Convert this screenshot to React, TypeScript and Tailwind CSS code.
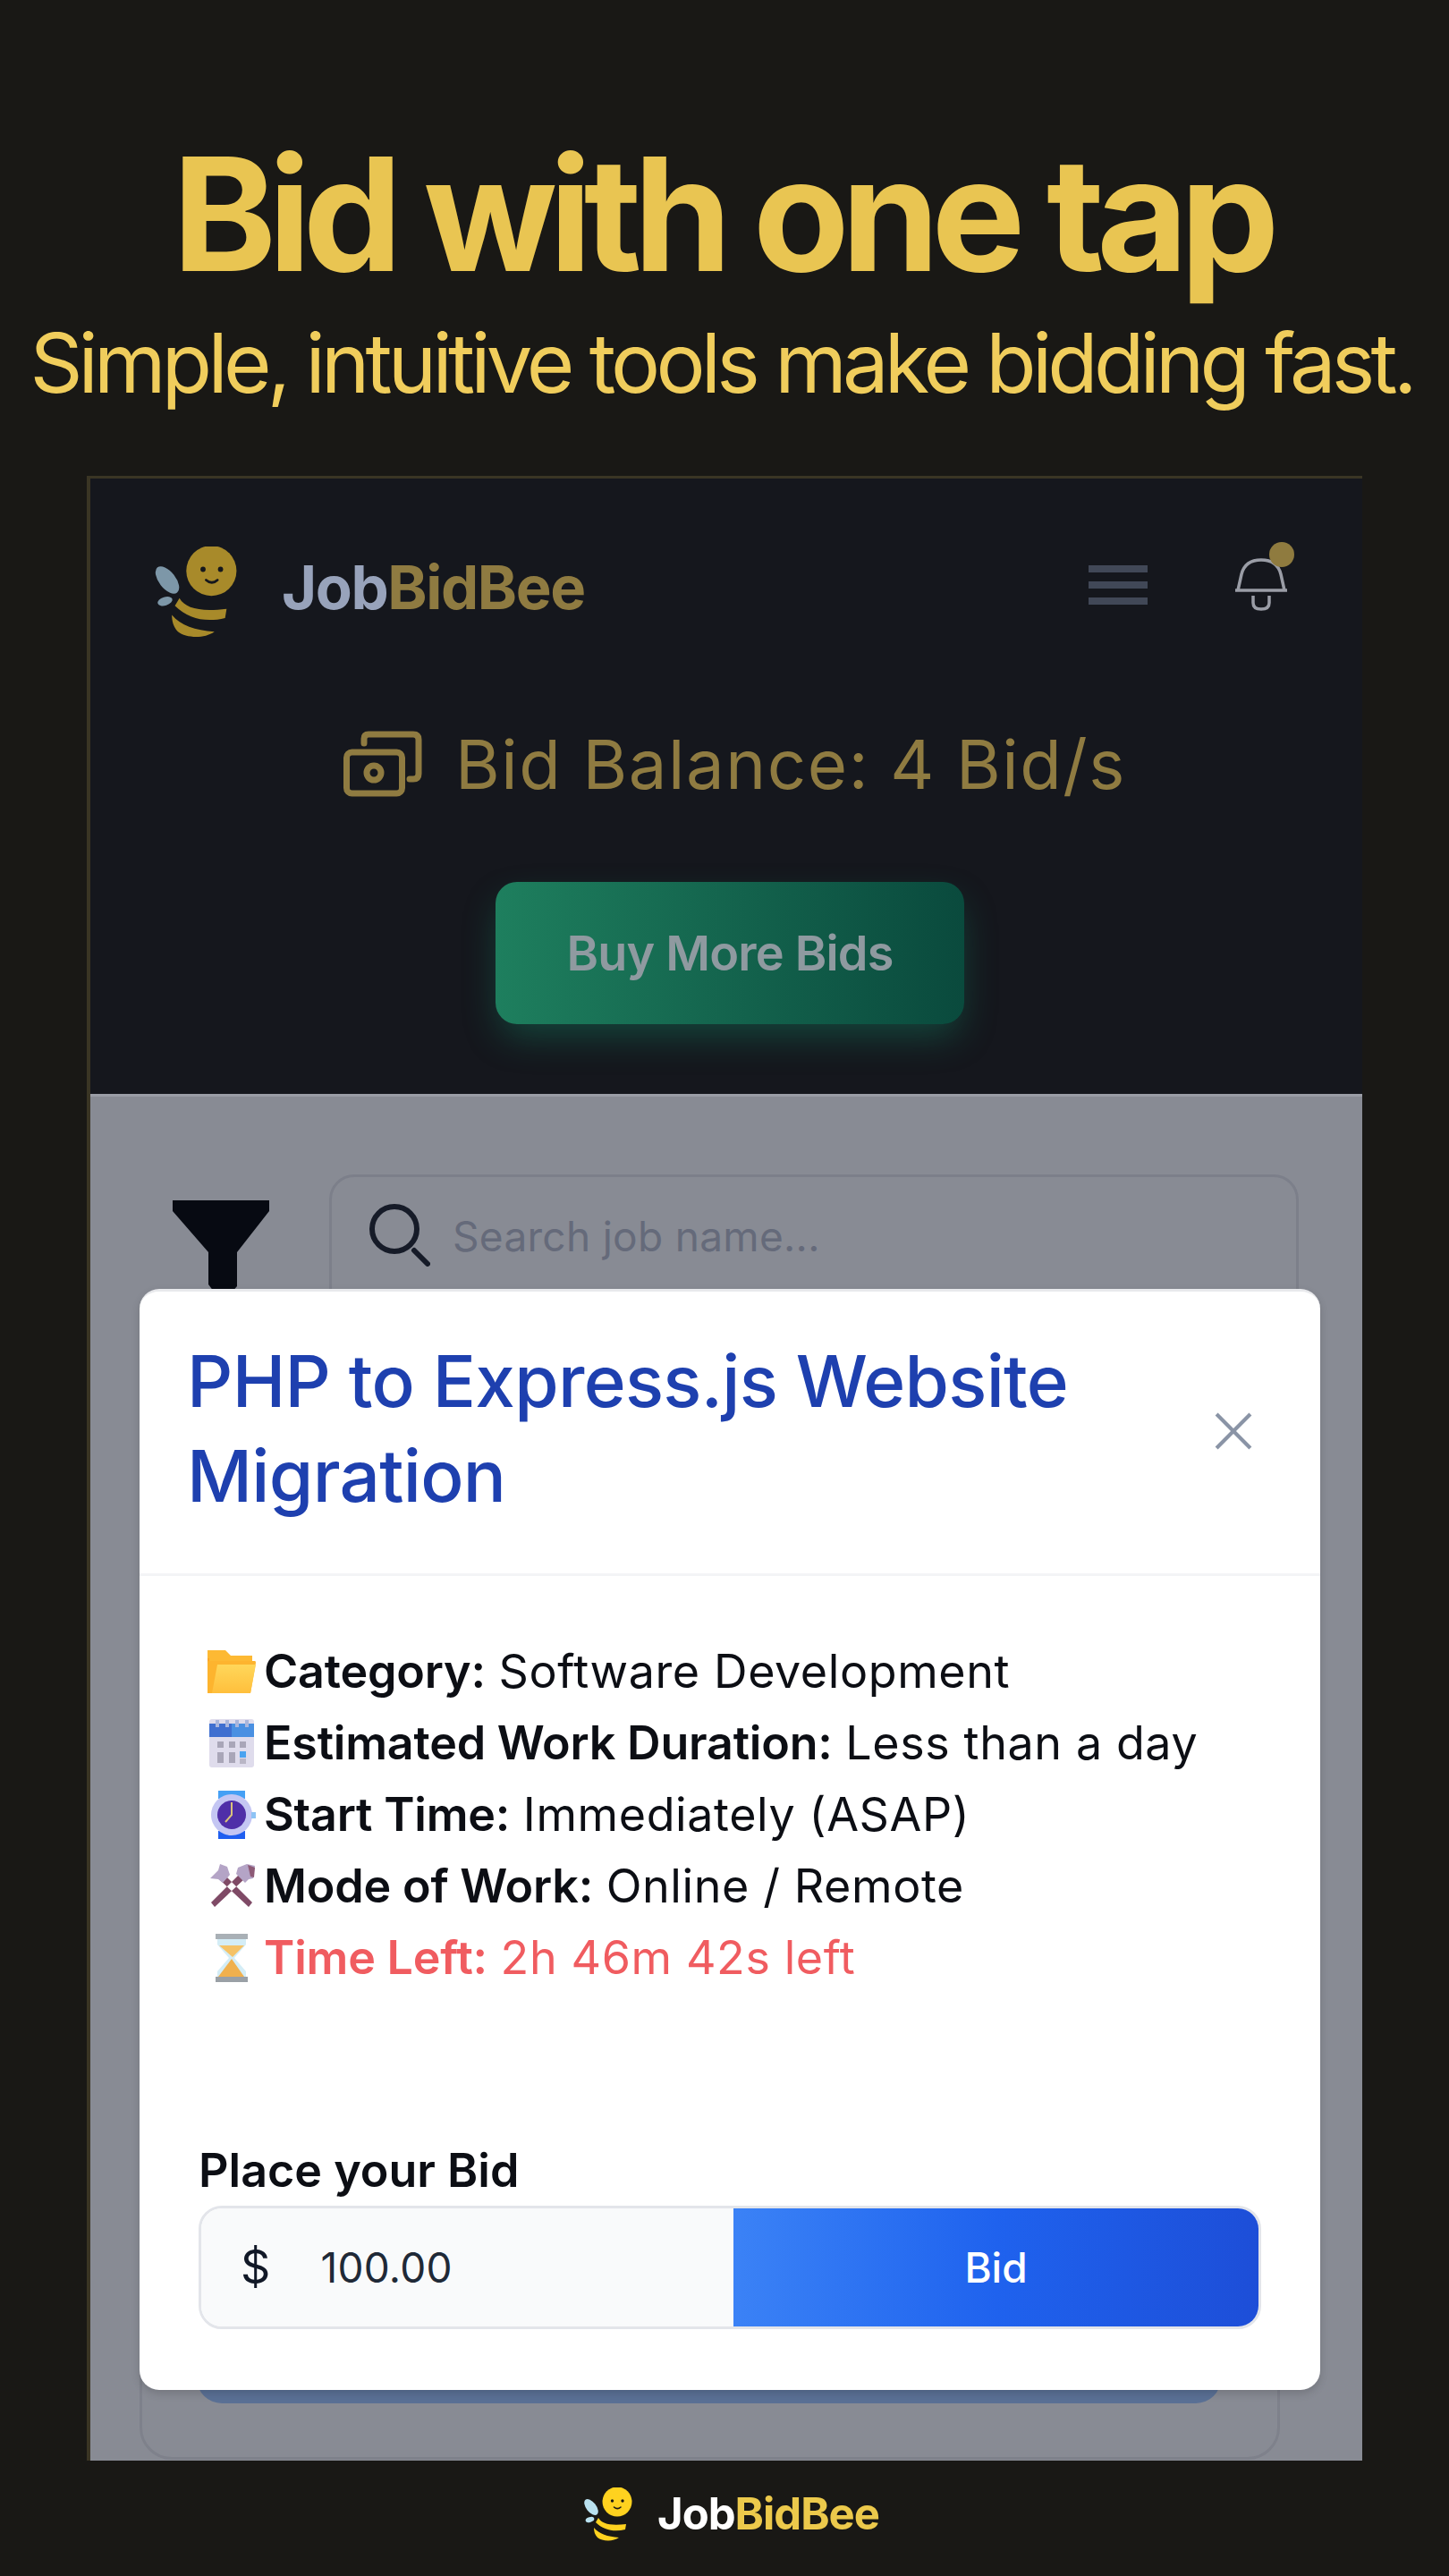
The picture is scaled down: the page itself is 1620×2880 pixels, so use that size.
const inter = "font-['Inter',sans-serif]";

function Bee({ className, head, stripe, wing, face }: { className: string; head: string; stripe: string; wing: string; face: string }) {
  return (
    <svg viewBox="0 0 57 60" className={className}>
      <ellipse cx="10" cy="22" rx="5.5" ry="10.5" transform="rotate(-38 10 22)" fill={wing} />
      <ellipse cx="8.5" cy="36" rx="5" ry="2.8" transform="rotate(-18 8.5 36)" fill={wing} />
      <circle cx="39" cy="16" r="16.5" fill={head} />
      <circle cx="33.5" cy="15" r="1.7" fill={face} />
      <circle cx="45" cy="15" r="1.7" fill={face} />
      <path d="M35.5 22q3.8 3.4 7.5 0" stroke={face} strokeWidth="1.6" fill="none" strokeLinecap="round" />
      <path d="M18 34C22 41 32 43 49 41L48 47C36 50 24 48 15 39Z" fill={stripe} />
      <path d="M13 45C19 52 28 55 41 56C34 61 22 60 17 56C14 53 13 49 13 45Z" fill={stripe} />
    </svg>
  );
}

function FolderEmoji() {
  return (
    <svg viewBox="0 0 54 54" className="w-[54px] h-[54px] shrink-0">
      <defs>
        <linearGradient id="fold" x1="0" y1="0" x2="0" y2="1">
          <stop offset="0" stopColor="#ffd75a" />
          <stop offset="1" stopColor="#ffbf3c" />
        </linearGradient>
      </defs>
      <path d="M0 3h20l6 6h24v12H0z" fill="#fdb933" />
      <path d="M0 12h2v39H0z" fill="#fca62a" />
      <path d="M0 51V16q0-1 1-1h52q1 0 1 2l-6 34z" fill="#fdb42e" />
      <path d="M11 19h43l-6 32H5z" fill="url(#fold)" />
    </svg>
  );
}

function CalendarEmoji() {
  return (
    <svg viewBox="0 0 54 54" className="w-[54px] h-[54px] shrink-0">
      <rect x="2" y="0" width="50" height="54" rx="3" fill="#dfdcec" />
      <path d="M2 5h50v15H2z" fill="#4a90e2" />
      <path d="M2 5h25v15H2z" fill="#3f6fd0" />
      <path d="M9 1h4v8H9zM20 1h4v8h-4zM31 1h4v8h-4zM42 1h4v8h-4z" fill="#aab6dc" />
      <path d="M11 25h7v7h-7zM24 25h7v7h-7zM36 25h7v7h-7zM11 37h7v12h-7zM24 37h7v12h-7z" fill="#a9a6b8" />
      <path d="M36 36h7v7h-7z" fill="#4aa3f0" />
      <path d="M36 44h7v6h-7z" fill="#b9b6c6" />
    </svg>
  );
}

function WatchEmoji() {
  return (
    <svg viewBox="0 0 54 54" className="w-[54px] h-[54px] shrink-0">
      <path d="M12 0h30v9H12z" fill="#45a0f5" />
      <path d="M12 45h30v9H12z" fill="#1f5ef0" />
      <circle cx="27" cy="27" r="23" fill="#c4c6f3" />
      <rect x="49" y="24" width="5" height="7" fill="#8dc3f5" />
      <circle cx="27" cy="27" r="16" fill="#4f2fa8" />
      <path d="M27 13v14l-7 8" stroke="#d9c27a" strokeWidth="2" fill="none" />
    </svg>
  );
}

function ToolsEmoji() {
  return (
    <svg viewBox="0 0 54 54" className="w-[54px] h-[54px] shrink-0">
      <path d="M12 18L46 50l4-5L18 13zM42 18L8 50l-4-5L36 13z" fill="#7f4a66" />
      <path d="M3 18L12 9l2-7 8 3 3 9-8 9-5-4z" fill="#b4a4c6" />
      <path d="M51 18l2-14-9-2-10 4-2 7 10 10 4-4z" fill="#b4a4c6" />
      <path d="M45 3l8 3-1 11-4-1z" fill="#8d5a76" />
    </svg>
  );
}

function HourglassEmoji() {
  return (
    <svg viewBox="0 0 54 54" className="w-[54px] h-[54px] shrink-0">
      <rect x="9" y="0" width="36" height="6" fill="#a9b0b6" />
      <rect x="9" y="48" width="36" height="6" fill="#9aa0a6" />
      <path d="M11 6h32v6L30 27l13 15v6H11v-6l13-15L11 12z" fill="#d4edf6" />
      <path d="M13 13h28L28 26z" fill="#f5c266" />
      <path d="M27 28l14 20H12z" fill="#f0b04e" />
    </svg>
  );
}

function Row({ icon, label, value, tone }: { icon: React.ReactNode; label: string; value: string; tone?: string }) {
  return (
    <div className={`flex items-center h-[80px] gap-[9px] ${tone ?? 'text-[#0c0e14]'}`}>
      {icon}
      <p className="text-[52px] leading-[80px] whitespace-nowrap">
        <span className="font-semibold tracking-[-0.2px]">{label}</span>{' '}
        <span className="tracking-[0.6px]">{value}</span>
      </p>
    </div>
  );
}

export default function App() {
  return (
    <div className={`w-[1620px] h-[2880px] bg-[#191815] flex flex-col items-center overflow-hidden ${inter}`}>
      <h1 className="mt-[144px] mr-[6px] text-[176px] leading-[190px] font-bold tracking-[-9px] text-[#e9c552] whitespace-nowrap">Bid with one tap</h1>
      <p className="mt-[16px] mr-[7px] text-[92px] leading-[112px] tracking-[-4.8px] text-[#f0cd5c] whitespace-nowrap">Simple, intuitive tools make bidding fast.</p>

      <div className="relative mt-[70px] w-[1426px] h-[2219px] border-t-[3px] border-l-[4px] border-[#3a3524] bg-[#888b94] overflow-hidden shrink-0">
        <header className="h-[691px] bg-[#15171d] border-b-[3px] border-[#9a9da6] flex flex-col">
          <div className="flex items-center pl-[68px] pr-[83px] pt-[76px]">
            <Bee className="w-[99px] h-[102px]" head="#a88a2a" stripe="#a88a2a" wing="#7d97a8" face="#15171d" />
            <div className="ml-[47px] text-[67px] leading-[80px] font-bold tracking-[-1.4px] text-[#98a3bb] mt-[-11px]">
              Job<span className="text-[#8f7b41]">BidBee</span>
            </div>
            <div className="ml-auto flex flex-col gap-[10px] mt-[-16px] mr-[97px]">
              <span className="block w-[66px] h-[8px] bg-[#414857]" />
              <span className="block w-[66px] h-[8px] bg-[#414857]" />
              <span className="block w-[66px] h-[8px] bg-[#414857]" />
            </div>
            <div className="relative w-[60px] h-[70px] mt-[-10px]">
              <svg viewBox="0 0 60 70" className="w-[60px] h-[70px]" fill="none" stroke="#9a9da6" strokeWidth="3.5">
                <path d="M1 38h58M4 38L8 20Q12 4 30 4T52 20L56 38" />
                <path d="M21 44v8q0 7 9 7t9-7v-8" />
              </svg>
              <span className="absolute right-[-7px] top-[-16px] w-[28px] h-[28px] rounded-full bg-[#8f7b3f]" />
            </div>
          </div>

          <div className="mt-[96px] ml-[283px] flex items-center gap-[37px] text-[#8f7b41]">
            <svg viewBox="0 0 88 74" className="w-[88px] h-[74px]" fill="none" stroke="#8f7b41" strokeWidth="7" strokeLinejoin="round">
              <rect x="3.5" y="24" width="62" height="46" rx="6" />
              <circle cx="34" cy="47" r="8" />
              <path d="M23 14V9q0-5 5-5h50q6 0 6 6v38q0 6-6 6h-4" strokeLinecap="round" />
            </svg>
            <span className="text-[76px] leading-[90px] tracking-[1.6px] whitespace-nowrap">Bid Balance: 4 Bid/s</span>
          </div>

          <button className="mt-[87px] ml-[453px] w-[524px] h-[159px] rounded-[24px] bg-gradient-to-r from-[#1e7f5e] to-[#0a4a3d] shadow-[0_18px_40px_-6px_rgba(20,130,100,0.45)] text-[#8f9aa0] text-[54px] font-semibold tracking-[-0.8px]">
            Buy More Bids
          </button>
        </header>

        <div className="flex items-start pt-[87px] pl-[92px] pr-[71px]">
          <svg viewBox="0 0 108 110" className="w-[108px] h-[110px] mt-[29px] shrink-0" fill="#070a12">
            <path d="M0 0h108v12L72 58v38L60 110H52L40 94V58L0 12z" />
          </svg>
          <div className="ml-[67px] flex-1 h-[160px] border-[3px] border-[#7c7f8a] rounded-[28px] flex items-start pt-[30px] pl-[42px]">
            <svg viewBox="0 0 68 70" className="w-[68px] h-[70px] shrink-0" fill="none" stroke="#161b28" strokeWidth="6">
              <circle cx="28" cy="28" r="25" />
              <path d="M50 52l15 15" strokeLinecap="round" />
            </svg>
            <span className="ml-[25px] mt-[4px] text-[46px] leading-[64px] tracking-[0.3px] text-[#656a7a]">Search job name...</span>
          </div>
        </div>

        <div className="absolute left-[55px] top-[1967px] w-[1275px] h-[248px] border-[3px] border-[#7e818b] rounded-[36px]" />
        <div className="absolute left-[119px] top-[2100px] w-[1145px] h-[52px] rounded-b-[28px] bg-[#5a7095] border-t-[10px] border-[#46597f]" />

        <div className="absolute left-[55px] top-[906px] w-[1320px] h-[1231px] bg-white rounded-[22px] border-t-[3px] border-[#e8e9ec] shadow-[0_4px_10px_rgba(0,0,0,0.15)] flex flex-col">
          <div className="flex items-center pl-[53px] pr-[76px] pt-[47px] pb-[56px] border-b-[3px] border-[#f3f4f6]">
            <h2 className="flex-1 text-[80px] leading-[106px] font-medium tracking-[-0.7px] text-[#1e40af]">PHP to Express.js Website<br />Migration</h2>
            <svg viewBox="0 0 40 40" className="w-[42px] h-[42px] shrink-0 mt-[6px]" stroke="#8a94a6" strokeWidth="4">
              <path d="M2 2l36 36M38 2L2 38" />
            </svg>
          </div>

          <div className="pt-[67px] pl-[76px]">
            <Row icon={<FolderEmoji />} label="Category:" value="Software Development" />
            <Row icon={<CalendarEmoji />} label="Estimated Work Duration:" value="Less than a day" />
            <Row icon={<WatchEmoji />} label="Start Time:" value="Immediately (ASAP)" />
            <Row icon={<ToolsEmoji />} label="Mode of Work:" value="Online / Remote" />
            <Row icon={<HourglassEmoji />} label="Time Left:" value="2h 46m 42s left" tone="text-[#f05c60]" />
          </div>

          <div className="mt-[166px] px-[66px]">
            <label className="block text-[52px] leading-[64px] font-semibold tracking-[0px] text-[#0c0e14]">Place your Bid</label>
            <div className="mt-[7px] h-[138px] flex rounded-[26px] border-[3px] border-[#e3e5ea] overflow-hidden">
              <div className="w-[595px] bg-[#f9fafb] flex items-center pl-[44px]">
                <span className="text-[52px] text-[#111827]">$</span>
                <span className="ml-[56px] text-[46px] tracking-[0.3px] text-[#1f2937]">100.00</span>
              </div>
              <button className="flex-1 bg-gradient-to-r from-[#3b82f6] via-[#1f62ee] to-[#1d4ed8] text-white text-[46px] font-medium">Bid</button>
            </div>
          </div>
        </div>
      </div>

      <div className="mt-[30px] flex items-center pl-[14px]">
        <Bee className="w-[57px] h-[60px]" head="#ffd21f" stripe="#ffd21f" wing="#b9e1ef" face="#191815" />
        <div className="ml-[27px] text-[49px] leading-[60px] font-bold tracking-[-1px] text-white">
          Job<span className="text-[#ecc94b]">BidBee</span>
        </div>
      </div>
    </div>
  );
}
